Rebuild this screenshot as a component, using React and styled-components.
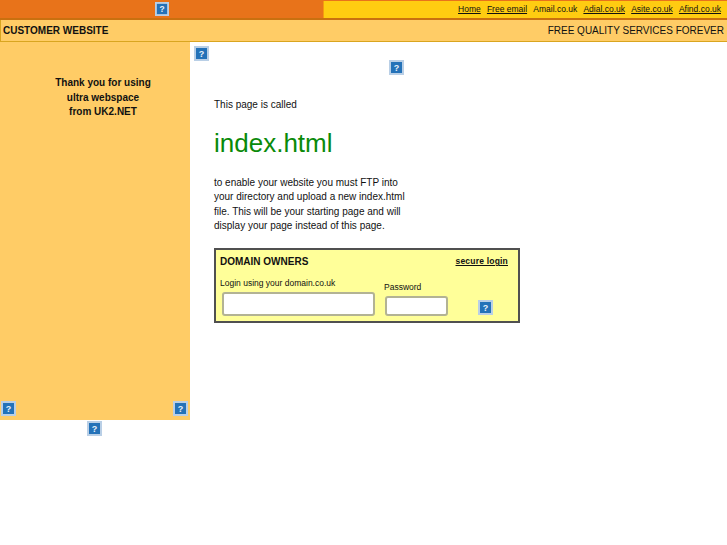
import styled, { createGlobalStyle } from "styled-components";

const GlobalStyle = createGlobalStyle`
  html, body {
    margin: 0;
    padding: 0;
    background: #fff;
    font-family: "Liberation Sans", Arial, sans-serif;
    font-size: 10px;
    color: #111;
  }
`;

const Page = styled.div`
  width: 727px;
  height: 545px;
  overflow: hidden;
`;

const TopBar = styled.div`
  height: 20px;
  box-sizing: border-box;
  background: #e8731a;
  border-bottom: 2px solid #c9700f;
  display: flex;
`;

const TopLeft = styled.div`
  width: 323px;
  padding: 2px 0 0 155px;
  box-sizing: border-box;
`;

const TopLinks = styled.nav`
  flex: 1;
  height: 17px;
  margin-top: 1px;
  box-sizing: border-box;
  background: #ffcc11;
  border-left: 1px solid #f59a10;
  display: flex;
  justify-content: flex-end;
  align-items: center;
  gap: 6.2px;
  padding: 0 6px 2px 0;
  font-size: 8.5px;
`;

const TopLink = styled.a`
  color: #111;
  text-decoration: ${(p) => (p.$plain ? "none" : "underline")};
`;

const HeaderBar = styled.div`
  height: 22px;
  box-sizing: border-box;
  background: #ffcc66;
  border-bottom: 1px solid #d9a520;
  border-left: 1px solid #d9a520;
  display: flex;
  justify-content: space-between;
  align-items: center;
  padding: 0 3px 0 2px;
  font-size: 10px;
`;

const HeaderTitle = styled.b`
  font-weight: 700;
`;

const Body = styled.div`
  display: flex;
`;

const LeftColumn = styled.div`
  width: 190px;
`;

const Sidebar = styled.aside`
  height: 378px;
  background: #ffcc66;
  display: flex;
  flex-direction: column;
  justify-content: space-between;
`;

const Thanks = styled.p`
  margin: 34.4px 0 0 16px;
  text-align: center;
  font-weight: 700;
  font-size: 10px;
  line-height: 14.5px;
`;

const SidebarIcons = styled.div`
  display: flex;
  justify-content: space-between;
  padding: 0 2px 4px 1px;
`;

const UnderSidebar = styled.div`
  display: flex;
  padding: 1px 0 0 87px;
`;

const Main = styled.main`
  flex: 1;
`;

const IconRowLeft = styled.div`
  height: 14px;
  padding: 4px 0 0 4px;
`;

const IconRowCenter = styled.div`
  height: 15px;
  padding-left: 199px;
`;

const Content = styled.div`
  padding: 23px 0 0 24px;
`;

const Copy = styled.p`
  margin: 0;
  width: 220px;
  font-size: 10px;
  line-height: 14.5px;
`;

const PageName = styled.h1`
  margin: 15px 0 18px;
  font-size: 26px;
  line-height: 30px;
  font-weight: 400;
  color: #0a8a0a;
`;

const LoginBox = styled.form`
  width: 306px;
  height: 75px;
  margin-top: 14px;
  box-sizing: border-box;
  background: #ffff99;
  border: 2px solid #505050;
  padding: 4px 10px 0 4px;
`;

const LoginHead = styled.div`
  display: flex;
  justify-content: space-between;
  align-items: center;
  height: 15px;
`;

const LoginTitle = styled.b`
  font-size: 10px;
`;

const SecureLink = styled.a`
  font-size: 8.5px;
  font-weight: 700;
  letter-spacing: 0.2px;
  color: #111;
  text-decoration: underline;
`;

const LoginFields = styled.div`
  display: flex;
  align-items: flex-end;
  margin-top: 9px;
`;

const Field = styled.label`
  display: flex;
  flex-direction: column;
  font-size: 8.5px;
  margin-right: ${(p) => p.$gap}px;
`;

const TextInput = styled.input`
  display: block;
  box-sizing: border-box;
  width: ${(p) => p.$w}px;
  height: ${(p) => p.$h}px;
  margin: 4px 0 0 ${(p) => p.$indent || 0}px;
  padding: 0;
  background: #fff;
  border: 2px solid #b3b394;
  border-radius: 3px;
  outline: none;
`;

const IconSlot = styled.div`
  padding-bottom: 1px;
`;

// broken image placeholder used everywhere the old page had a missing gif
const BrokenImage = ({ size = 15 }) => (
  <svg width={size} height={size} viewBox="0 0 15 15" style={{ display: "block" }}>
    <rect width="15" height="15" fill="#b9cfe6" />
    <rect x="2" y="2" width="11" height="11" fill="#2472b8" />
    <text
      x="7.5"
      y="11"
      textAnchor="middle"
      fontSize="9"
      fontWeight="700"
      fontFamily="Liberation Sans, sans-serif"
      fill="#e8f1fa"
    >
      ?
    </text>
  </svg>
);

export default function App() {
  return (
    <Page>
      <GlobalStyle />
      <TopBar>
        <TopLeft>
          <BrokenImage size={14} />
        </TopLeft>
        <TopLinks>
          <TopLink href="#">Home</TopLink>
          <TopLink href="#">Free email</TopLink>
          <TopLink $plain>Amail.co.uk</TopLink>
          <TopLink href="#">Adial.co.uk</TopLink>
          <TopLink href="#">Asite.co.uk</TopLink>
          <TopLink href="#">Afind.co.uk</TopLink>
        </TopLinks>
      </TopBar>
      <HeaderBar>
        <HeaderTitle>CUSTOMER WEBSITE</HeaderTitle>
        <span>FREE QUALITY SERVICES FOREVER</span>
      </HeaderBar>
      <Body>
        <LeftColumn>
          <Sidebar>
            <Thanks>
              Thank you for using
              <br />
              ultra webspace
              <br />
              from UK2.NET
            </Thanks>
            <SidebarIcons>
              <BrokenImage />
              <BrokenImage />
            </SidebarIcons>
          </Sidebar>
          <UnderSidebar>
            <BrokenImage />
          </UnderSidebar>
        </LeftColumn>
        <Main>
          <IconRowLeft>
            <BrokenImage />
          </IconRowLeft>
          <IconRowCenter>
            <BrokenImage />
          </IconRowCenter>
          <Content>
            <Copy>This page is called</Copy>
            <PageName>index.html</PageName>
            <Copy>
              to enable your website you must FTP into
              <br />
              your directory and upload a new index.html
              <br />
              file. This will be your starting page and will
              <br />
              display your page instead of this page.
            </Copy>
            <LoginBox>
              <LoginHead>
                <LoginTitle>DOMAIN OWNERS</LoginTitle>
                <SecureLink href="#">secure login</SecureLink>
              </LoginHead>
              <LoginFields>
                <Field $gap={9}>
                  Login using your domain.co.uk
                  <TextInput $w={153} $h={24} $indent={2} />
                </Field>
                <Field $gap={30}>
                  Password
                  <TextInput $w={63} $h={20} $indent={1} />
                </Field>
                <IconSlot>
                  <BrokenImage />
                </IconSlot>
              </LoginFields>
            </LoginBox>
          </Content>
        </Main>
      </Body>
    </Page>
  );
}
